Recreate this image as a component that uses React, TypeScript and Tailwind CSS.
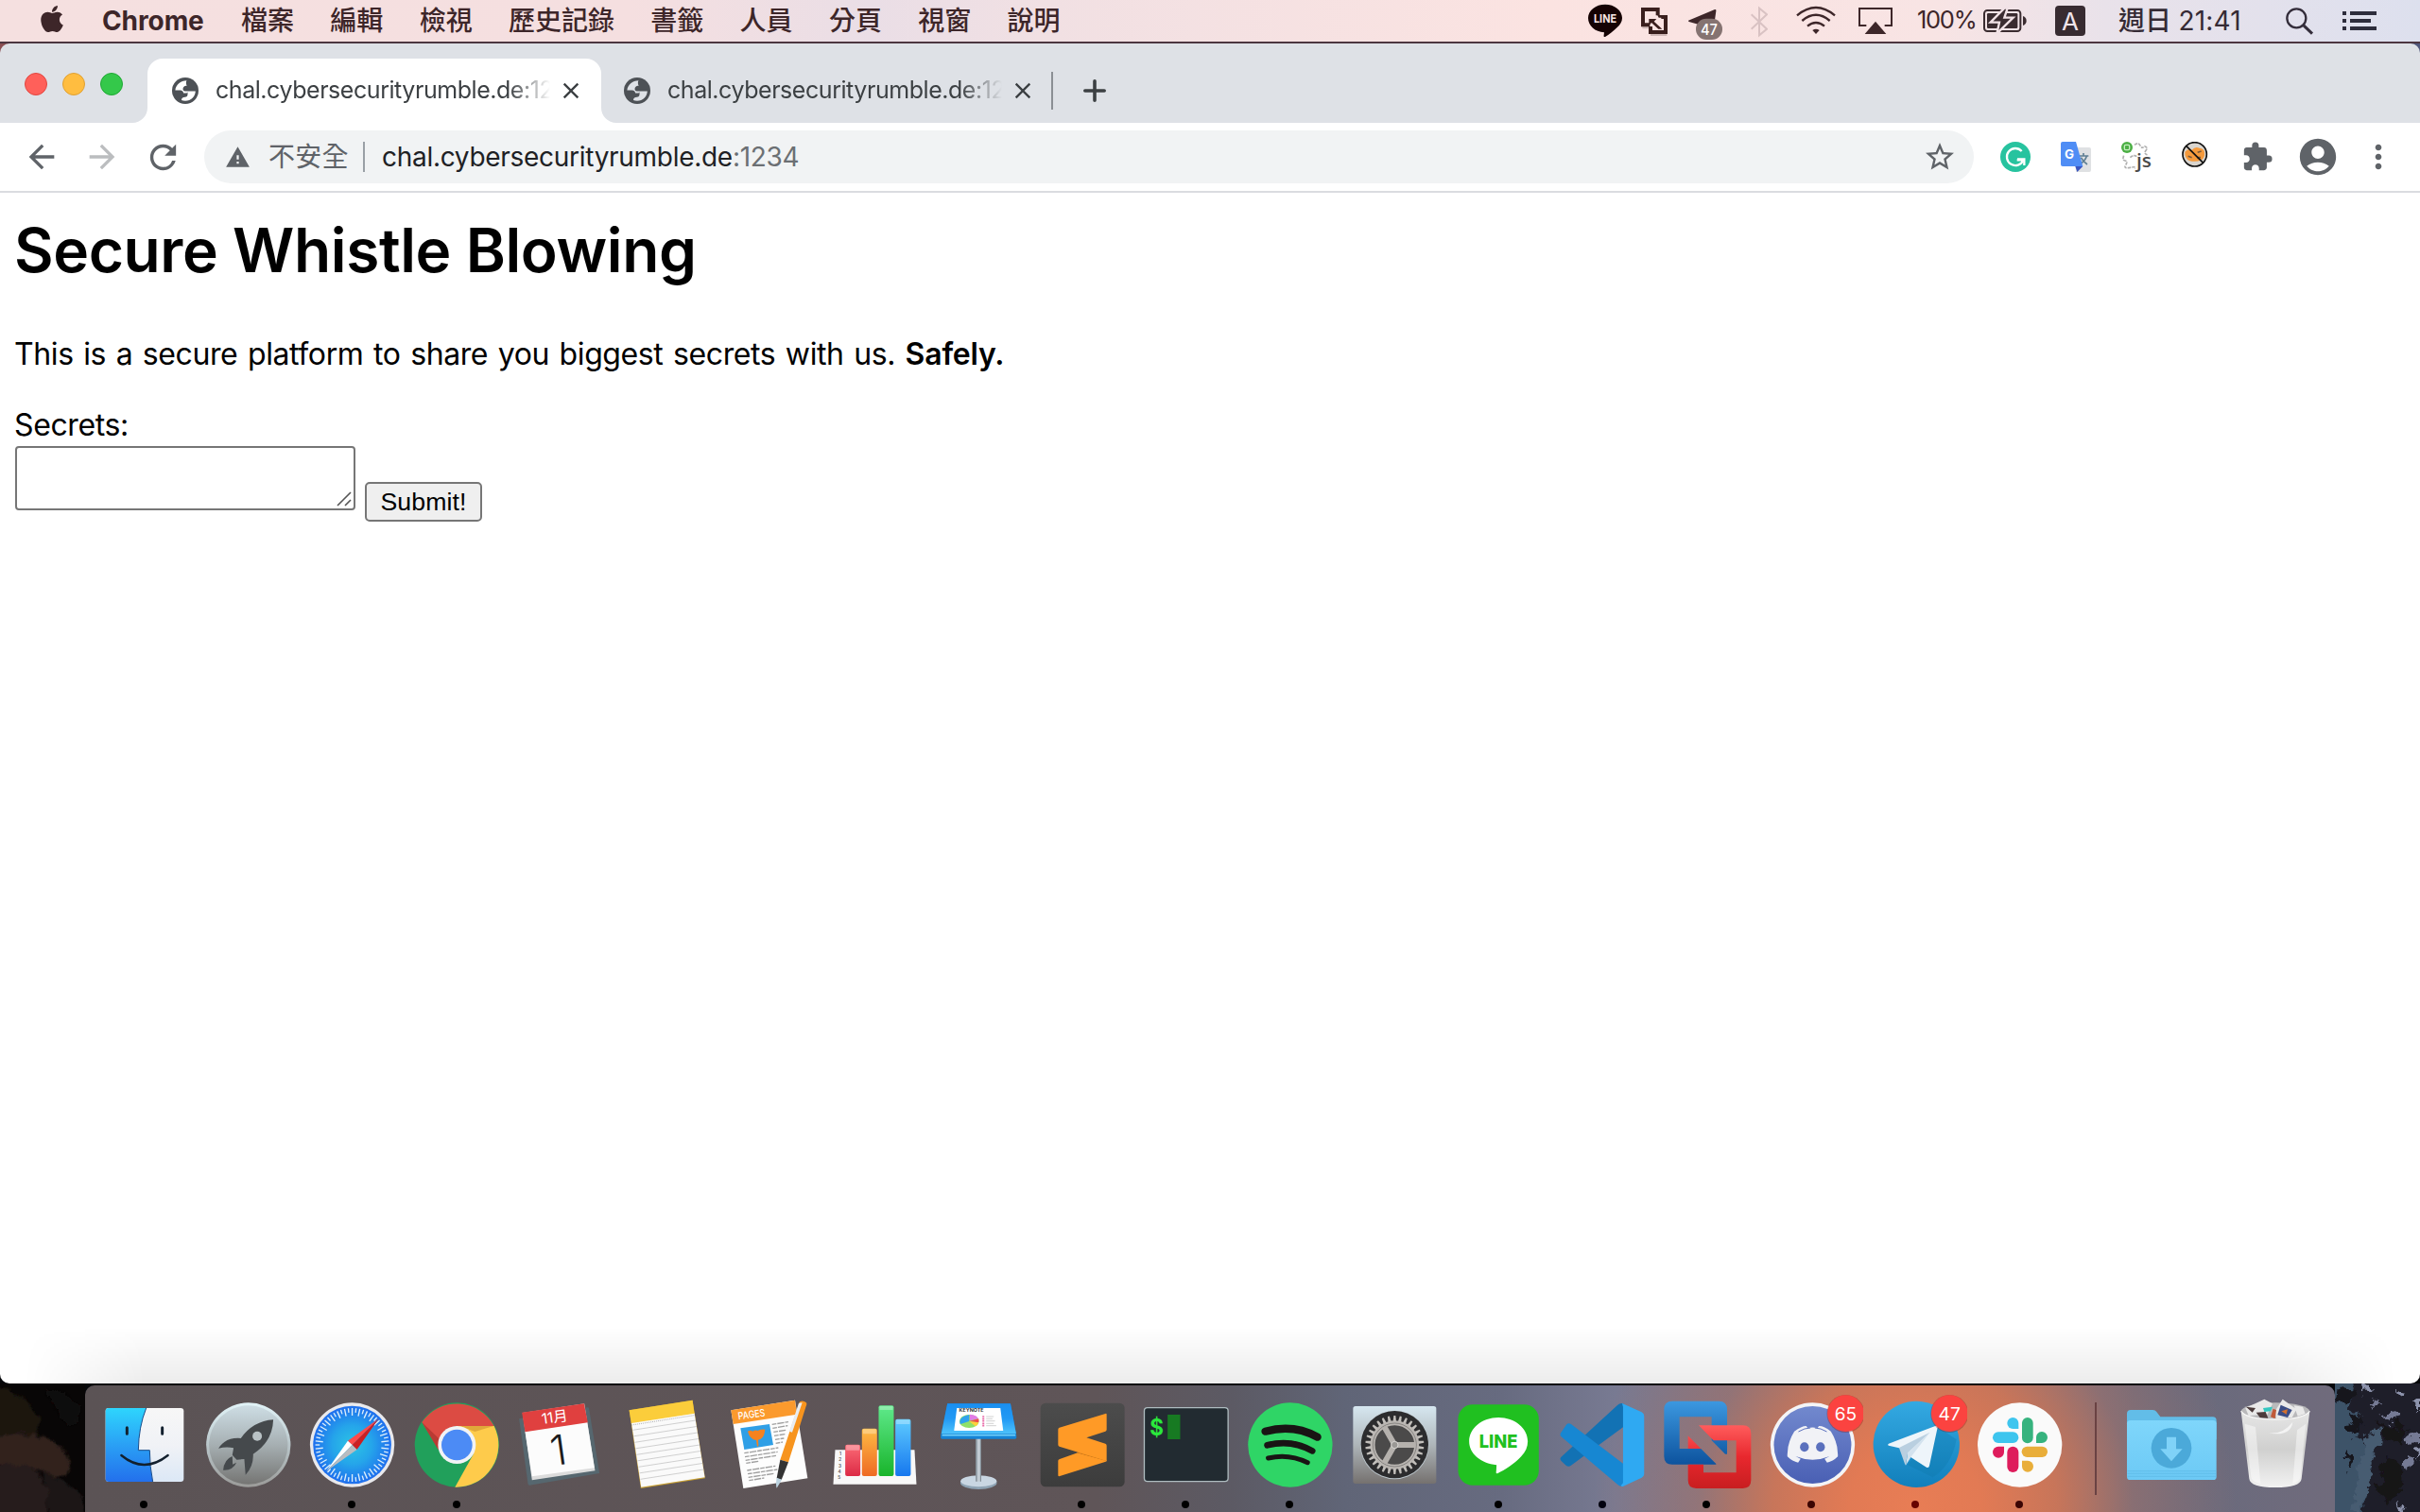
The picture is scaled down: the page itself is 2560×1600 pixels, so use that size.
import type { ReactNode } from "react";
import {
  MdArrowBack,
  MdArrowForward,
  MdRefresh,
  MdWarning,
  MdStarBorder,
  MdExtension,
  MdAccountCircle,
  MdMoreVert,
  MdClose,
} from "react-icons/md";
import { FaApple } from "react-icons/fa";

const UI = "font-['Inter','Noto_Sans_CJK_TC',sans-serif]";

const menus = ["檔案", "編輯", "檢視", "歷史記錄", "書籤", "人員", "分頁", "視窗", "說明"];

function MenuBar() {
  return (
    <div className="flex h-[46px] shrink-0 items-start border-b-2 border-[#4c3640] bg-[linear-gradient(90deg,#f5e0e0_0%,#f5dfe0_26%,#eadee6_36%,#f1e0e3_43%,#fbe3e1_64%,#f8e4e4_80%,#e9e2ea_87%,#dde0ee_100%)] text-[#3d2629]">
      <div className="flex h-[44px] items-center">
        <FaApple className="ml-[39px] size-[32px] -translate-y-[2px]" />
        <span className="ml-[37px] w-[147px] text-[28px] font-bold tracking-[-0.1px]">Chrome</span>
        <div className="flex gap-[38.3px] text-[28px] font-medium">
          {menus.map((m) => (
            <span key={m} className="whitespace-nowrap">{m}</span>
          ))}
        </div>
      </div>
      <div className="ml-auto flex h-[44px] items-center pr-[46px]">
        <svg viewBox="120 0 108 132" className="h-[44px] w-[36px]">
          <path d="M174 14c30 0 54 19 54 43 0 13-7 22-16 30-11 11-26 23-38 30-4 1-5-2-4-6l1-8c-29-2-51-21-51-46 0-24 24-43 54-43z" fill="#150203" />
          <text x="174" y="72" textAnchor="middle" className="font-['Inter'] text-[36px] font-bold" textLength="72" lengthAdjust="spacingAndGlyphs" fill="#f8e6e4">LINE</text>
        </svg>
        <svg viewBox="288 0 84 132" className="ml-[20px] h-[44px] w-[28px] overflow-visible">
          <path d="M292 88h22M318 111h52" stroke="#bda7a5" strokeWidth="6" opacity=".7" />
          <g fill="none" stroke="#3a1f1d" strokeWidth="12">
            <path d="M316 79h-22V30h47v19" />
            <path d="M352 54h14v48h-48V84" />
          </g>
          <path d="M313 60h24l-8 8 26 24h-12l-22-20-8 9zM340 48h14v8h-10z" fill="#3a1f1d" />
        </svg>
        <svg viewBox="438 0 108 132" className="ml-[22px] h-[44px] w-[36px]">
          <path d="M438 65l84-35q5-1 4 5l-7 50-50-8-29-8q-3-2-2-4z" fill="#3d2629" />
          <rect x="462" y="59" width="84" height="67" rx="33" fill="#857371" />
          <text x="504" y="110" textAnchor="middle" className="font-['Inter'] text-[48px] font-medium" textLength="54" lengthAdjust="spacingAndGlyphs" fill="#fff">47</text>
        </svg>
        <svg viewBox="636 0 54 132" className="ml-[30px] h-[44px] w-[18px]">
          <path d="M638 46l49 46-24 20V26l24 20-49 46" fill="none" stroke="#d9c2c3" strokeWidth="6" />
        </svg>
        <svg viewBox="780 0 126 132" className="ml-[30px] h-[44px] w-[42px]">
          <g fill="none" stroke="#3d2629" strokeWidth="7">
            <path d="M783 49q60-50 120 0" />
            <path d="M799 66q44-37 88 0" />
            <path d="M816 83q27-22 54 0" />
          </g>
          <path d="M832 96q11-8 22 0l-11 12z" fill="#3d2629" />
        </svg>
        <svg viewBox="978 0 108 132" className="ml-[24px] h-[44px] w-[36px]">
          <path d="M1003 81h-22V27h102v54h-22" fill="none" stroke="#3d2629" strokeWidth="6" />
          <path d="M1032 68l34 40h-68z" fill="#3d2629" />
        </svg>
        <span className="ml-[26px] w-[70px] -translate-y-px text-[25.5px] tracking-[-1.3px]">100%</span>
        <svg viewBox="54 0 138 132" className="h-[44px] w-[46px]">
          <rect x="57" y="33" width="115" height="66" rx="10" fill="none" stroke="#3a2c30" strokeWidth="6" />
          <rect x="66" y="42" width="97" height="48" rx="4" fill="#3a2c30" />
          <path d="M180 51q11 4 11 15t-11 15z" fill="#3a2c30" />
          <path d="M121 26l-44 45h28l-8 36 52-51h-28l10-30z" fill="#3a2c30" stroke="#f1e2e6" strokeWidth="7" />
        </svg>
        <span className="ml-[30px] flex size-[32px] items-center justify-center rounded-[4px] bg-[#372b31] text-[26px] text-[#f0e4ea]">A</span>
        <span className="ml-[35px] w-[177px] whitespace-nowrap text-[28px] font-medium text-[#352b35]">
          週日 <span className="text-[28px] font-normal tracking-[0.2px]">21:41</span>
        </span>
        <svg viewBox="1014 0 90 132" className="h-[44px] w-[30px]">
          <g fill="none" stroke="#332d3a" strokeWidth="7">
            <circle cx="1048" cy="58" r="30" />
            <path d="M1069 79l29 28" strokeWidth="9" />
          </g>
        </svg>
        <svg viewBox="1194 0 108 132" className="ml-[30px] h-[44px] w-[36px]" fill="#2d2d3c">
          <path d="M1194 36h12v12h-12zM1194 60h12v12h-12zM1194 84h12v12h-12zM1218 36h84v12h-84zM1218 60h66v12h-66zM1218 84h84v12h-84z" />
        </svg>
      </div>
    </div>
  );
}

function Globe() {
  return (
    <svg viewBox="0 0 28 28" className="size-[28px] shrink-0">
      <circle cx="14" cy="14" r="14" fill="#4d5156" />
      <path d="M15.5 3.2C9 3.4 4 7.500 3.400 13.400h5.200c2.200 0 3.400 1.300 3.400 3.100h3.200c1.200 0 1.900-.8 1.900-2h-3.400c-1.300 0-2.200-1-2.200-2.200 0-2.300 1.700-3.500 3.400-3.500h.8c-.9-1.700-1.200-3.900-.2-5.600z" fill="currentColor" />
      <path d="M17.100 14.500h7.700c-.2 5.600-4.700 10.200-10.800 10.300-1.500 0-2.900-.3-4-.8 0-2.400 1.600-3.300 3.600-3.300 1.900 0 2.900-1.200 2.900-2.700v-1.500z" fill="currentColor" />
    </svg>
  );
}

function TabContent() {
  return (
    <>
      <Globe />
      <span className="ml-[18px] w-[356px] overflow-hidden whitespace-nowrap text-[25px] tracking-[-0.45px] text-[#3c4043] [mask-image:linear-gradient(90deg,#000_310px,transparent_354px)]">
        chal.cybersecurityrumble.de:1234
      </span>
      <MdClose className="ml-[6px] size-[28px] shrink-0 text-[#3c4043]" />
    </>
  );
}

function TabStrip() {
  return (
    <div className="flex h-[84px] shrink-0 items-end bg-[#dee1e6]">
      <div className="flex w-[156px] items-center gap-[16px] self-center pt-[2px] pl-[26px]">
        <span className="size-[24px] rounded-full border border-[#e2463f] bg-[#ff605a]" />
        <span className="size-[24px] rounded-full border border-[#dfa032] bg-[#ffbd40]" />
        <span className="size-[24px] rounded-full border border-[#1fa934] bg-[#34c84a]" />
      </div>
      <div className="relative flex h-[68px] w-[480px] items-center rounded-t-[16px] bg-white pl-[26px]">
        <svg viewBox="0 0 16 16" className="absolute bottom-0 -left-[16px] size-[16px]"><path d="M16 0v16H0A16 16 0 0 0 16 0z" fill="#fff" /></svg>
        <div className="flex items-center text-white"><TabContent /></div>
        <svg viewBox="0 0 16 16" className="absolute -right-[16px] bottom-0 size-[16px]"><path d="M0 0v16h16A16 16 0 0 1 0 0z" fill="#fff" /></svg>
      </div>
      <div className="flex h-[68px] w-[476px] items-center pl-[24px] text-[#dee1e6]">
        <TabContent />
      </div>
      <div className="flex h-[68px] items-center">
        <span className="h-[40px] w-[2px] bg-[#8b8f94]" />
        <svg viewBox="0 0 24 24" className="ml-[32px] size-[24px]"><path d="M12 1.8v20.4M1.8 12h20.4" stroke="#3c4043" strokeWidth="3.6" strokeLinecap="round" /></svg>
      </div>
    </div>
  );
}

function Toolbar() {
  return (
    <div className="flex h-[74px] shrink-0 items-center border-b-2 border-[#dadce0] bg-white pl-[24px] text-[#5f6368]">
      <MdArrowBack className="size-[40px] shrink-0" />
      <MdArrowForward className="ml-[24px] size-[40px] shrink-0 text-[#bbbdbf]" />
      <MdRefresh className="ml-[24px] size-[41px] shrink-0" />
      <div className="ml-[23px] flex h-[56px] w-[1872px] shrink-0 items-center rounded-full bg-[#f1f3f4] pr-[18px] pl-[22px]">
        <MdWarning className="size-[27px] shrink-0" />
        <span className="ml-[19px] w-[85px] text-[28px] tracking-[0.3px] whitespace-nowrap">不安全</span>
        <span className="ml-[15px] h-[32px] w-[2px] bg-[#9aa0a6]" />
        <span className="ml-[18px] text-[28px] tracking-[-0.29px] text-[#202124]">
          chal.cybersecurityrumble.de<span className="text-[#6b6f73]">:1234</span>
        </span>
        <MdStarBorder className="ml-auto size-[36px]" />
      </div>
      <svg viewBox="108 450 96 96" className="ml-[28px] size-[32px] shrink-0">
        <circle cx="156" cy="498" r="48" fill="#27c39f" />
        <path d="M176 480a27 27 0 1 0 5 28h-20" fill="none" stroke="#fff" strokeWidth="7" />
        <path d="M162 505h22v20" fill="none" stroke="#fff" strokeWidth="7" />
      </svg>
      <svg viewBox="300 450 96 96" className="ml-[32px] size-[32px] shrink-0">
        <path d="M342 468h48q6 0 6 6v66q0 6-6 6h-42z" fill="#dfe1e3" />
        <path d="M357 495h31M372 486v9M382 496q-4 14-20 25M364 500q6 12 20 22" fill="none" stroke="#5f7f93" strokeWidth="5" />
        <path d="M306 450h42l22 78h-64q-6 0-6-6v-66q0-6 6-6z" fill="#4f8df5" />
        <path d="M346 528h24l-18 18z" fill="#3a55c0" />
        <text x="312" y="503" className="font-['Inter'] text-[40px] font-bold" fill="#fff">G</text>
      </svg>
      <svg viewBox="492 450 96 96" className="ml-[32px] size-[32px] shrink-0">
        <path d="M534 460q12-10 18 2t14 2q12 4 4 14t6 14M500 494q-6 14 4 16t2 14 14 8 14 2M520 500q14-12 24 0" fill="none" stroke="#b0b0b0" strokeWidth="5" strokeDasharray="10 3" />
        <circle cx="510" cy="468" r="18" fill="#4caf45" />
        <rect x="502" y="460" width="16" height="16" rx="4" fill="none" stroke="#c6eec0" strokeWidth="4" />
        <text x="540" y="532" className="font-['Open_Sans'] text-[60px] font-semibold" fill="#4a4a4a" textLength="48" lengthAdjust="spacingAndGlyphs">js</text>
      </svg>
      <svg viewBox="684 450 96 96" className="ml-[32px] size-[32px] shrink-0">
        <circle cx="725" cy="490" r="38" fill="#d9d5cf" />
        <path d="M694 482q10-12 22-6 10-12 24-6 16 2 16 14 2 18-10 24-18 8-38 2-16-8-14-28z" fill="#f59a3c" />
        <path d="M704 496l12 4M734 484l12-4M732 500h12" stroke="#7a5a3a" strokeWidth="5" />
        <circle cx="725" cy="490" r="38" fill="none" stroke="#111" strokeWidth="5" />
        <path d="M698 463l54 54" stroke="#111" strokeWidth="5" />
      </svg>
      <MdExtension className="ml-[31px] size-[34px] shrink-0" />
      <MdAccountCircle className="ml-[24px] size-[46px] shrink-0" />
      <MdMoreVert className="ml-[21px] size-[40px] shrink-0" />
    </div>
  );
}

function Page() {
  return (
    <div className="relative flex-1 bg-white pl-[16px] font-['Inter',sans-serif] text-black">
      <h1 className="-ml-px pt-[21px] text-[64px] leading-[80px] font-semibold tracking-[-0.4px] whitespace-nowrap">Secure Whistle Blowing</h1>
      <p className="mt-[47px] -ml-px text-[32px] leading-[46px] tracking-[-0.4px] whitespace-nowrap [word-spacing:2px]">
        This is a secure platform to share you biggest secrets with us. <b className="font-semibold tracking-[-0.2px]">Safely.</b>
      </p>
      <div className="mt-[30px] -ml-px text-[32px] leading-[44px] tracking-[-0.4px]">Secrets:</div>
      <div className="flex items-start">
        <div className="flex h-[68px] w-[360px] items-end justify-end rounded-[4px] border-2 border-[#767676] p-[2px]">
          <svg viewBox="0 0 16 16" className="size-[16px]"><path d="M1 15L15 1M9 15l6-6" stroke="#555" strokeWidth="1.6" /></svg>
        </div>
        <button className="mt-[38px] ml-[10px] flex h-[42px] w-[124px] items-center justify-center rounded-[5px] border-2 border-[#767676] bg-[#efefef] font-['Liberation_Sans'] text-[26.67px] tracking-[0.1px]">Submit!</button>
      </div>
      <div className="absolute right-0 bottom-0 left-0 h-[60px] bg-[linear-gradient(180deg,rgba(0,0,0,0),rgba(0,0,0,0.075))] [mask-image:linear-gradient(90deg,transparent_1%,#000_6%,#000_94%,transparent_99%)]" />
    </div>
  );
}

type Slot = { name: string; left: number; dot?: string; art: ReactNode };

const teeth = Array.from({ length: 30 }, (_, i) => i * 12);
const ticks = Array.from({ length: 60 }, (_, i) => i * 6);

const apps: Slot[] = [
  {
    name: "finder", left: 291, dot: "#000",
    art: (
      <>
        <rect x="335" y="150" width="248" height="234" rx="10" fill="url(#finderR)" />
        <path d="M345 150h119q-24 60-25 134h36q0 52 10 100H345q-10 0-10-10V160q0-10 10-10z" fill="url(#finderL)" />
        <path d="M464 150q-24 60-25 134h36q0 52 10 100" fill="none" stroke="#174c8a" strokeWidth="3" />
        <path d="M403 212v20M515 212v20" stroke="#12202e" strokeWidth="9" strokeLinecap="round" />
        <path d="M385 300q72 60 148 0" fill="none" stroke="#12202e" strokeWidth="7" strokeLinecap="round" />
      </>
    ),
  },
  {
    name: "launchpad", left: 621.7,
    art: (
      <>
        <circle cx="789" cy="267" r="134" fill="url(#lpRim)" />
        <circle cx="789" cy="267" r="125" fill="url(#lp)" />
        <path d="M868 187q-64 4-103 59-48-4-71 32 26-6 48-1l-4 22 14 15 24-2 4 50q26-28 24-66 62-40 64-109zM738 303q-26 10-29 44 30 2 42-24l-12 6z" fill="#45494c" />
        <circle cx="817" cy="239" r="15" fill="#b9c2c5" />
      </>
    ),
  },
  {
    name: "safari", left: 952.3, dot: "#000",
    art: (
      <>
        <circle cx="1119" cy="267" r="134" fill="#e9e9ec" />
        <circle cx="1119" cy="267" r="124" fill="url(#saf)" />
        {ticks.map((a) => (
          <path key={a} d={a % 12 ? "M1119 150v14" : "M1119 150v24"} stroke="#dff0fb" strokeWidth="4" transform={`rotate(${a} 1119 267)`} />
        ))}
        <path d="M1203 184l-98 70 14 13z" fill="#ff4a4a" />
        <path d="M1203 184l-69 98-15-15z" fill="#cc1f22" />
        <path d="M1037 350l68-96 14 13z" fill="#fff" />
        <path d="M1037 350l97-68-15-15z" fill="#b9bcc0" />
      </>
    ),
  },
  {
    name: "chrome", left: 23, dot: "#000",
    art: (
      <>
        <circle cx="189" cy="267" r="134" fill="#21a05b" />
        <path d="M189 207h118a134 134 0 0 1-124 194l58-104z" fill="#fecb4b" />
        <path d="M189 207h118a134 134 0 0 0-229-12l52 84q0-60 59-72z" fill="#dc4b43" />
        <path d="M78 195l52 88 8-30z" fill="#b93a34" />
        <path d="M200 207h106l-60 18z" fill="#e0a83a" />
        <circle cx="189" cy="267" r="60" fill="#f2f3f5" />
        <circle cx="189" cy="267" r="49" fill="#4c8bf5" />
      </>
    ),
  },
  {
    name: "calendar", left: 353.6,
    art: (
      <>
        <path d="M387 184l216-36q5-1 6 4l33 205-222 38q-4 0-5-5z" fill="#56676f" />
        <path d="M398 165l30 214 200-30-34-213z" fill="#dcdcdc" />
        <path d="M406 225l22 142 198-27-23-146z" fill="#fcfcfc" />
        <path d="M396 164l197-28 12 60-199 30z" fill="#e0403f" />
        <text x="502" y="195" transform="rotate(-8 502 195)" textAnchor="middle" className="font-['Inter','Noto_Sans_CJK_TC'] text-[46px]" fill="#fff">11月</text>
        <text x="518" y="330" transform="rotate(-8 518 330)" textAnchor="middle" className="font-['Inter'] text-[132px] font-light" fill="#1c1c1c">1</text>
      </>
    ),
  },
  {
    name: "notes", left: 684.3,
    art: (
      <>
        <path d="M737 157l201-32 40 248-204 32z" fill="#c8a032" />
        <path d="M744 196l200-30 33 204-202 31z" fill="#fafafa" />
        <path d="M737 157l201-32 6 42-200 31z" fill="#fbcd3b" />
        <path d="M745 204l198-31" stroke="#888" strokeWidth="2" strokeDasharray="3 3" />
        {[0, 1, 2, 3, 4, 5, 6, 7, 8].map((i) => (
          <path key={i} d="M748 220l200-31" transform={`translate(${i * 3.1} ${i * 19.5})`} stroke="#b9b9b9" strokeWidth="2" />
        ))}
      </>
    ),
  },
  {
    name: "pages", left: 1015,
    art: (
      <>
        <path d="M1061 157l203-32 40 248-204 32z" fill="#fdfdfd" />
        <path d="M1061 157l203-32 6 45-202 31z" fill="#fb9a2d" />
        <text x="1085" y="187" transform="rotate(-8 1085 187)" textLength="86" lengthAdjust="spacingAndGlyphs" className="font-['Inter'] text-[32px] font-medium" fill="#fff">PAGES</text>
        <path d="M1091 214l92-13 12 66-92 15z" fill="#2f9fe6" />
        <path d="M1114 224q8-5 16 0 8-6 16-2 10-5 23-4-2 24-14 30l-8 3 1 20-4 1-3-20q-20-2-27-28z" fill="#f58220" />
        <path d="M1191 202l52-8M1193 214l48-8M1196 226l40-6M1198 238l34-5M1201 250l28-4M1203 262l22-4M1103 293l108-17M1105 305l104-16M1107 316l98-15M1109 325l40-6M1112 348l90-14M1114 359l94-14M1116 370l82-12M1118 380l48-8" stroke="#9f9f9f" strokeWidth="4" strokeDasharray="14 3 22 3" />
        <path d="M1279 130q10-6 20 2 4 4 0 12l-56 178-26-8z" fill="#f7941e" />
        <path d="M1276 134l-30 90 9 3 32-94z" fill="#e8edf2" />
        <path d="M1217 314l26 8-22 56-15-5z" fill="#333" />
        <path d="M1206 371l16 6-16 27q-4-12 0-33z" fill="#bcd3e0" />
      </>
    ),
  },
  {
    name: "numbers", left: 55.6,
    art: (
      <>
        <path d="M99 283h252l6 109H93z" fill="#f8f8f8" />
        <g fill="#666" className="font-['Inter'] text-[14px] font-bold" textAnchor="middle">
          <text x="116" y="300">1</text><text x="115" y="319">2</text><text x="114" y="338">3</text><text x="113" y="357">4</text><text x="112" y="375">5</text>
        </g>
        <rect x="131" y="266" width="48" height="100" rx="6" fill="url(#nR)" />
        <rect x="184" y="215" width="48" height="151" rx="6" fill="url(#nO)" />
        <rect x="237" y="142" width="48" height="224" rx="6" fill="url(#nG)" />
        <rect x="290" y="185" width="49" height="181" rx="6" fill="url(#nB)" />
        <path d="M134 268h42v16h-42zM187 217h42v15h-42zM240 144h42v12h-42zM293 187h43v14h-43z" fill="#fff" opacity=".3" />
      </>
    ),
  },
  {
    name: "keynote", left: 386.3,
    art: (
      <>
        <ellipse cx="555" cy="387" rx="58" ry="21" fill="#8ea3b4" />
        <ellipse cx="555" cy="382" rx="57" ry="18" fill="#c9d6e2" />
        <path d="M546 245h17v136q-8 5-17 0z" fill="#c2cbd3" />
        <path d="M546 245h4v138h-4zM560 245h3v138h-3z" fill="#7d8891" />
        <path d="M456 136h200l19 100v8q0 4-4 4H439q-4 0-4-4v-8z" fill="#1584d6" />
        <path d="M456 136h200l18 95H437z" fill="url(#key)" />
        <path d="M439 236h233" stroke="#6fd0fb" strokeWidth="5" />
        <path d="M486 150h138l9 72H477z" fill="#fff" />
        <text x="493" y="163" textLength="78" lengthAdjust="spacingAndGlyphs" className="font-['Inter'] text-[14px] font-bold" fill="#333">KEYNOTE</text>
        <ellipse cx="525" cy="192" rx="31" ry="21" fill="#8fe06a" />
        <path d="M525 192l-28 9q-8-22 28-30z" fill="#2fa3ee" />
        <path d="M527 190v-20q24 2 27 14z" fill="#e27be6" />
        <path d="M525 192l30-8q2 6 0 12z" fill="#f24b4b" />
        <path d="M525 192l30 4q-2 8-10 12z" fill="#ffd23c" />
        <path d="M567 177h6M567 184h6M567 191h6M567 199h6M567 206h6" stroke="#e86aa8" strokeWidth="5" />
        <path d="M579 177h24M579 184h20M579 191h28M579 199h24M579 206h32" stroke="#bbb" strokeWidth="2" />
      </>
    ),
  },
  {
    name: "sublime", left: 717, dot: "#000",
    art: (
      <>
        <rect x="752" y="134" width="267" height="266" rx="16" fill="url(#sub)" />
        <path d="M813 312l57-20 93 25q0 2-4 3l-148 47q-3 0-3-3v-47q0-3 5-5z" fill="#ff9a26" />
        <path d="M868 290l40-4 53 32-94-26z" fill="#d87c16" />
        <path d="M958 168q4-2 4 3v47q0 4-4 6l-60 20 60 19q4 2 4 6v49l-150-46q-4-2-4-6v-48q0-4 4-6z" fill="#ff9a26" />
      </>
    ),
  },
  {
    name: "terminal", left: 1047.6, dot: "#000",
    art: (
      <>
        <rect x="1082" y="149" width="266" height="234" rx="10" fill="#222b31" stroke="#aebcc0" strokeWidth="4" />
        <text x="1099" y="237" className="font-['Inter'] text-[74px] font-bold" textLength="44" lengthAdjust="spacingAndGlyphs" fill="#2be83c">$</text>
        <rect x="1156" y="171" width="40" height="78" fill="#177a22" />
      </>
    ),
  },
  {
    name: "spotify", left: 88.3, dot: "#000",
    art: (
      <>
        <circle cx="256" cy="267" r="134" fill="#2fd566" />
        <g fill="none" stroke="#191414" strokeLinecap="round">
          <path d="M177 224q90-24 165 18" strokeWidth="25" />
          <path d="M183 268q76-20 143 18" strokeWidth="20" />
          <path d="M186 309q64-16 125 14" strokeWidth="15" />
        </g>
      </>
    ),
  },
  {
    name: "settings", left: 419,
    art: (
      <>
        <rect x="453" y="144" width="264" height="246" rx="8" fill="url(#set)" />
        <circle cx="585" cy="267" r="109" fill="#bcc6cc" />
        <circle cx="585" cy="266" r="107" fill="#2c2c2e" />
        {teeth.map((a) => (
          <path key={a} d="M580 192l2-18h6l2 18z" fill="#c2bfbb" transform={`rotate(${a} 585 267)`} />
        ))}
        <circle cx="585" cy="267" r="70" fill="#4b4a4a" stroke="#bab6b2" strokeWidth="15" />
        <circle cx="585" cy="267" r="69" fill="none" stroke="#6a6866" strokeWidth="2" />
        <path d="M585 267h66M585 267l-33-58M585 267l-33 58" stroke="#b5b1ad" strokeWidth="18" />
        <circle cx="585" cy="267" r="11" fill="#9a9895" stroke="#d8d6d3" strokeWidth="3" />
      </>
    ),
  },
  {
    name: "line", left: 749.6, dot: "#000",
    art: (
      <>
        <rect x="787" y="139" width="256" height="256" rx="46" fill="#20c020" />
        <path d="M915 180c52 0 93 34 93 76 0 18-7 33-21 48-20 22-54 44-74 53-6 2-6-2-5-6l1-20c-50-5-87-36-87-75 0-42 41-76 93-76z" fill="#fff" />
        <text x="915" y="277" textAnchor="middle" textLength="122" lengthAdjust="spacingAndGlyphs" className="font-['Inter'] text-[58px] font-extrabold" fill="#20c020">LINE</text>
      </>
    ),
  },
  {
    name: "vscode", left: 1080.2, dot: "#02020f",
    art: (
      <>
        <path d="M1114 306l180-166q8-8 18-4v74l-166 122q-8 6-16 0l-15-14q-6-6-1-12z" fill="#1272b4" />
        <path d="M1114 228l18-26q6-6 14-1l166 126v70q-10 4-18-4l-179-152q-6-6-1-13z" fill="#1787d2" />
        <path d="M1308 135l62 28q8 4 8 12v184q0 8-8 12l-58 27q-6 2-8-2l7-8V146z" fill="#2fa9f2" />
      </>
    ),
  },
  {
    name: "vmware", left: 151, dot: "#000",
    art: (
      <>
        <path fillRule="evenodd" d="M208 128h148q26 0 26 26v142h-6l-43-43v-75H231v101h68l48 48v2H208q-26 0-26-26V154q0-26 26-26z" fill="url(#vmB)" />
        <path d="M292 205h140q26 0 26 26v148q0 26-26 26H284q-26 0-26-26v-50h49v26h104V253h-72zM258 279v-41l41 41z" fill="url(#vmR)" />
      </>
    ),
  },
  {
    name: "discord", left: 481.6, dot: "#3b0502",
    art: (
      <>
        <circle cx="651" cy="267" r="134" fill="#f4f4f6" />
        <circle cx="651" cy="267" r="123" fill="url(#dis)" />
        <path d="M593 224q22-17 38-17l4 6q16-3 32 0l4-6q18 0 38 17 24 38 22 80-16 16-34 19l-8-12 16-8q-54 22-108 0l16 8-8 12q-18-3-34-19-2-42 22-80z" fill="#f1f2f6" />
        <ellipse cx="625" cy="274" rx="14" ry="15" fill="#5a70bd" />
        <ellipse cx="676" cy="274" rx="14" ry="15" fill="#5a70bd" />
        <path d="M606 225q20-12 38-12M696 225q-20-12-38-12" fill="none" stroke="#5a70bd" strokeWidth="3" />
        <Badge x={756} n="65" />
      </>
    ),
  },
  {
    name: "telegram", left: 812.2, dot: "#660400",
    art: (
      <>
        <circle cx="981" cy="265" r="137" fill="url(#tg)" />
        <path d="M1048 210l60 40q-14 80-75 120l-80-40z" fill="#0f78ad" opacity=".35" />
        <path d="M893 263l150-57q6-2 5 6l-26 122q-2 8-9 4l-58-37-3-13-26-11-33-8q-5-2 0-6z" fill="#eef5fa" />
        <path d="M926 276l98-49-70 65-8 40z" fill="#b9cfe0" />
        <path d="M954 292l70-65-58 75-19 30z" fill="#d3e2ee" />
        <Badge x={1086} n="47" />
      </>
    ),
  },
  {
    name: "slack", left: -117, dot: "#3b0504",
    art: (
      <>
        <circle cx="50" cy="267" r="134" fill="#fafafa" />
        <path d="M46 216V198a18 18 0 1 0-18 18z" fill="#3ec5ee" />
        <rect x="-36" y="226" width="82" height="35" rx="17.5" fill="#3ec5ee" />
        <rect x="57" y="180" width="35" height="82" rx="17.5" fill="#36b37e" />
        <path d="M102 261v-17a18 18 0 1 1 18 17z" fill="#36b37e" />
        <rect x="10" y="272" width="36" height="82" rx="18" fill="#de1c5c" />
        <path d="M0 272h-18a18 18 0 1 0 18 18z" fill="#de1c5c" />
        <rect x="56" y="272" width="82" height="34" rx="17" fill="#e9ae3a" />
        <path d="M57 317h18a18 18 0 1 1-18 18z" fill="#e9ae3a" />
      </>
    ),
  },
];

function Badge({ x, n }: { x: number; n: string }) {
  return (
    <>
      <circle cx={x} cy="168" r="60" fill="#7a1c18" opacity=".35" />
      <circle cx={x} cy="167" r="58" fill="#fb4340" />
      <text x={x} y="188" textAnchor="middle" textLength="70" lengthAdjust="spacingAndGlyphs" className="font-['Inter'] text-[58px]" fill="#fff">{n}</text>
    </>
  );
}

function Grad({ id, stops }: { id: string; stops: string[] }) {
  return (
    <linearGradient id={id} x1="0" y1="0" x2="0" y2="1">
      {stops.map((c, i) => (
        <stop key={i} offset={i / (stops.length - 1)} stopColor={c} />
      ))}
    </linearGradient>
  );
}

function Defs() {
  return (
    <svg className="absolute size-0">
      <defs>
        <Grad id="finderL" stops={["#2ed5fd", "#2aa0f5", "#2370ec"]} />
        <Grad id="finderR" stops={["#f7f7f7", "#f0f2f6", "#dce8f6"]} />
        <Grad id="lpRim" stops={["#e2f4f8", "#b9c6ca", "#9b9b99"]} />
        <Grad id="lp" stops={["#cddde4", "#a6afb2", "#757573"]} />
        <radialGradient id="saf"><stop offset="0" stopColor="#2cc4e4" /><stop offset=".5" stopColor="#25a5ea" /><stop offset="1" stopColor="#1f6fee" /></radialGradient>
        <Grad id="nR" stops={["#fb6b76", "#dc2a45"]} />
        <Grad id="nO" stops={["#ffbb44", "#ee6a24"]} />
        <Grad id="nG" stops={["#5fe98b", "#19b42b"]} />
        <Grad id="nB" stops={["#5ecbff", "#1677ee"]} />
        <Grad id="key" stops={["#1a8ff0", "#2299f4", "#4cc2fb"]} />
        <Grad id="sub" stops={["#4c4c4c", "#3c3c3c"]} />
        <Grad id="set" stops={["#d6e7f0", "#aeb5b9", "#75716f"]} />
        <Grad id="vmB" stops={["#3c98e0", "#0d539e"]} />
        <Grad id="vmR" stops={["#ff5c5c", "#e8282e", "#c81e20"]} />
        <Grad id="dis" stops={["#7289ce", "#4a60b4"]} />
        <Grad id="tg" stops={["#34a9e2", "#117fbb"]} />
        <Grad id="fold" stops={["#7fd6fb", "#6cc9f5"]} />
        <Grad id="bin" stops={["#e6e6e6", "#d0d0cf", "#f2f2f2"]} />
        <filter id="rough" x="-10%" y="-10%" width="120%" height="120%">
          <feTurbulence type="fractalNoise" baseFrequency="0.025" numOctaves="4" seed="7" result="n" />
          <feDisplacementMap in="SourceGraphic" in2="n" scale="60" xChannelSelector="R" yChannelSelector="G" />
        </filter>
        <filter id="soft" x="-10%" y="-10%" width="120%" height="120%">
          <feGaussianBlur stdDeviation="5" result="b" />
          <feTurbulence type="fractalNoise" baseFrequency="0.03" numOctaves="4" seed="3" result="n" />
          <feDisplacementMap in="b" in2="n" scale="30" xChannelSelector="R" yChannelSelector="G" />
        </filter>
      </defs>
    </svg>
  );
}

function Dock() {
  return (
    <div className="flex h-[134px] w-[2380px] rounded-t-[10px] bg-[radial-gradient(circle_at_1936px_130px,#e87d55_0px,#e27a54_70px,rgba(208,118,86,0.9)_150px,rgba(170,115,105,0.5)_230px,rgba(110,108,128,0)_340px),linear-gradient(90deg,#5b5355_0%,#5f5558_45%,#5c5a64_51%,#606577_56%,#676b80_63%,#787a92_68%,#7b7382_74%,#8a7078_84%,#676a7d_91%,#706b7c_100%)] pl-[7px]">
      {apps.map((a) => (
        <svg key={a.name} viewBox={`${a.left} 78 330.66 402`} className="h-[134px] w-[110.22px] shrink-0">
          {a.art}
          {a.dot && <circle cx={a.left + 165} cy="456" r="12" fill={a.dot} />}
        </svg>
      ))}
      <span className="mt-[18px] ml-[25px] h-[98px] w-[2px] shrink-0 bg-[#6a4243]" />
      <svg viewBox="366 78 330 402" className="ml-[24px] h-[134px] w-[110px] shrink-0">
        <path d="M402 156h70q8 0 12 6l12 16h166q12 0 12 12v60H390v-82q0-12 12-12z" fill="#62bde8" />
        <path d="M402 189h260q12 0 12 10v169q0 10-10 10H400q-10 0-10-10V199q0-10 12-10z" fill="url(#fold)" />
        <path d="M391 350h282M391 358h282M391 367h282" stroke="#5cb8e4" strokeWidth="2" />
        <circle cx="531" cy="277" r="64" fill="#4ba9d9" />
        <path d="M516 242h30v38h20l-35 39-35-39h20z" fill="#7fd2f8" />
      </svg>
      <svg viewBox="696 78 330 402" className="h-[134px] w-[110px] shrink-0">
        <ellipse cx="861" cy="160" rx="109" ry="27" fill="#b9b9bb" />
        <path d="M766 150l60-28 26 14-16 34-60 4zM860 160l24-38 44 32-14 26-50 4zM920 142l28 4 8 22-24 8z" fill="#e9e9e9" />
        <path d="M800 164l30-2 8 20-26-2zM768 146l30 4-10 14z" fill="#4b3b3b" />
        <path d="M822 150l30-4-6 14-20 2z" fill="#35c7c0" />
        <path d="M846 178l8-26 10 4-4 28z" fill="#c05a3a" />
        <path d="M868 172l10-32 36 16-14 24z" fill="#3b4d86" />
        <path d="M880 160l20-6-4 16z" fill="#d3702e" />
        <path d="M752 160q20 26 109 26t109-26l-26 214q-3 28-83 28t-83-28z" fill="url(#bin)" />
        <path d="M752 160q20 26 109 26t109-26" fill="none" stroke="#f6f6f6" strokeWidth="4" />
        <path d="M832 228q50 10 84-34-6 50-84 34z" fill="#f3f3f3" />
        <path d="M764 200l20 170q2 14 30 20l-16-180zM958 200l-18 170q-2 14-24 20l14-170z" fill="#fff" opacity=".45" />
      </svg>
    </div>
  );
}

function RocksLeft() {
  return (
    <svg viewBox="0 72 270 408" className="h-[136px] w-[90px] bg-[#080606]">
      <g filter="url(#soft)">
        <path d="M-20 90q90 0 130 70 20 40 0 80L-20 260z" fill="#1a1211" />
        <path d="M-20 250q80-30 160-8 70 20 84 100-8 30-60 24Q60 320-20 330z" fill="#33221e" />
        <path d="M-20 335q90-20 150 30 30 50 20 130H-20z" fill="#281c1a" />
        <path d="M140 360q70 20 120 70l10 60H160z" fill="#1c1515" />
        <path d="M150 90q80 10 100 60l-10 60q-60-20-90-120z" fill="#0e0b0b" />
      </g>
    </svg>
  );
}

function RocksRight() {
  return (
    <svg viewBox="1050 72 270 408" className="h-[136px] w-[90px] bg-[#1e1e29]">
      <g filter="url(#rough)">
        <path d="M1020 60h90l-20 72 40 50-10 60 40 60-20 80 10 120h-130z" fill="#3d5268" />
        <path d="M1140 250l60-40-14 60-24 60 10 40-30 60-6 50h-30l20-120z" fill="#465b71" />
        <path d="M1060 84l50 10-20 40-34 10zM1100 170l44 20-20 40-34-20zM1086 300l14-10 6 40-12 30z" fill="#14161f" />
        <path d="M1206 176q30-26 60-10-10 30-40 26zM1270 240l50-10v30l-30 4zM1160 130l40 10-24 20zM1276 300l30 10-10 40-24-10z" fill="#757a94" />
        <path d="M1130 80l50 6-16 14-30-4zM1250 90l40 10-30 10zM1250 456l34 14-30 6zM1290 130l30-10v40zM1300 280l20-6v40z" fill="#8d93ac" />
        <path d="M1196 200q40-10 74 14l-10 50-50-10zM1214 300l50 20-10 90-40 40-30-40z" fill="#171319" />
      </g>
    </svg>
  );
}

export default function App() {
  return (
    <div className={`${UI} relative flex h-[1600px] w-[2560px] flex-col overflow-hidden bg-[linear-gradient(90deg,#8a4f52,#4c3640_50%,#50587c)]`}>
      <Defs />
      <MenuBar />
      <div className="z-10 flex h-[1418px] shrink-0 flex-col overflow-hidden rounded-[10px]">
        <TabStrip />
        <Toolbar />
        <Page />
      </div>
      <div className="-mt-[12px] flex h-[148px] shrink-0 items-end bg-[#06070a]">
        <RocksLeft />
        <Dock />
        <RocksRight />
      </div>
    </div>
  );
}
